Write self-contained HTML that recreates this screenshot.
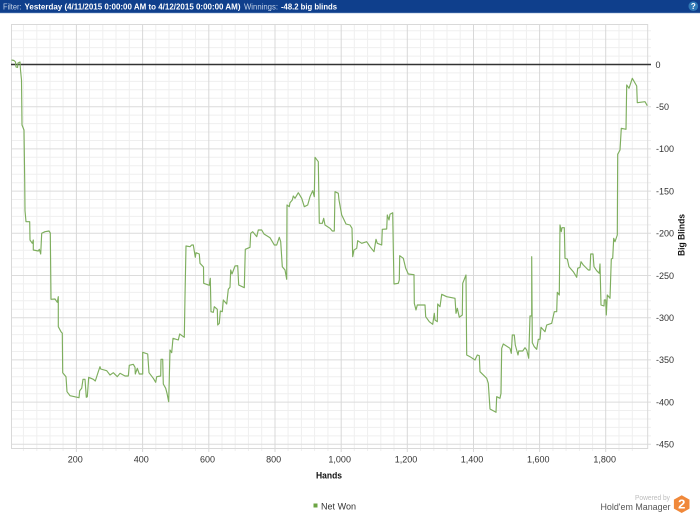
<!DOCTYPE html>
<html><head><meta charset="utf-8">
<style>
html,body{margin:0;padding:0;background:#fff;width:700px;height:516px;overflow:hidden}
svg{display:block}
text{font-family:"Liberation Sans",sans-serif}
</style></head>
<body>
<svg width="700" height="516" viewBox="0 0 700 516" xmlns="http://www.w3.org/2000/svg">
<rect x="0" y="0" width="700" height="13" fill="#0f3f8c"/>
<rect x="0" y="12.6" width="700" height="0.6" fill="#5d82b8"/>
<g font-size="8.6" fill="#fff">
<text x="3" y="9.5" fill="#c4d3e8" textLength="18.5" lengthAdjust="spacingAndGlyphs">Filter:</text>
<text x="24.5" y="9.5" font-weight="bold" textLength="216" lengthAdjust="spacingAndGlyphs">Yesterday (4/11/2015 0:00:00 AM to 4/12/2015 0:00:00 AM)</text>
<text x="244" y="9.5" fill="#c4d3e8" textLength="34" lengthAdjust="spacingAndGlyphs">Winnings:</text>
<text x="281" y="9.5" font-weight="bold" textLength="56" lengthAdjust="spacingAndGlyphs">-48.2 big blinds</text>
</g>
<circle cx="693.3" cy="6.2" r="4.8" fill="#2f78b5"/>
<text x="693.3" y="9.2" font-size="8" font-weight="bold" fill="#fff" text-anchor="middle">?</text>

<!-- minor horizontal -->
<path fill="none" stroke="#efefef" stroke-width="1" d="M11 30.7H651M11 39.2H651M11 47.6H651M11 56.1H651M11 72.9H651M11 81.4H651M11 89.8H651M11 98.3H651M11 115.1H651M11 123.6H651M11 132H651M11 140.5H651M11 157.3H651M11 165.8H651M11 174.2H651M11 182.7H651M11 199.5H651M11 208H651M11 216.4H651M11 224.9H651M11 241.7H651M11 250.2H651M11 258.6H651M11 267.1H651M11 283.9H651M11 292.4H651M11 300.8H651M11 309.3H651M11 326.1H651M11 334.6H651M11 343H651M11 351.5H651M11 368.3H651M11 376.8H651M11 385.2H651M11 393.7H651M11 410.5H651M11 419H651M11 427.4H651M11 435.9H651"/>
<!-- minor vertical -->
<path fill="none" stroke="#efefef" stroke-width="1" d="M23.4 24V451M36.8 24V451M50 24V451M63.1 24V451M89.5 24V451M102.8 24V451M116 24V451M129.3 24V451M155.8 24V451M169 24V451M182.2 24V451M195.5 24V451M222 24V451M235.2 24V451M248.4 24V451M261.7 24V451M288.1 24V451M301.4 24V451M314.6 24V451M327.9 24V451M354.3 24V451M367.6 24V451M380.8 24V451M394 24V451M420.5 24V451M433.8 24V451M447 24V451M460.2 24V451M486.7 24V451M500 24V451M513.2 24V451M526.4 24V451M552.9 24V451M566.1 24V451M579.4 24V451M592.6 24V451M619 24V451M632.3 24V451"/>
<!-- major horizontal -->
<path fill="none" stroke="#dcdcdc" stroke-width="1" d="M11 106.7H651M11 148.9H651M11 191.1H651M11 233.3H651M11 275.5H651M11 317.7H651M11 359.9H651M11 402.1H651M11 444.3H651"/>
<!-- major vertical -->
<path fill="none" stroke="#d8d8d8" stroke-width="1" d="M76.4 24V452M142.6 24V452M208.8 24V452M275 24V452M341.2 24V452M407.3 24V452M473.5 24V452M539.6 24V452M605.7 24V452"/>
<!-- frame -->
<path fill="none" stroke="#d9d9d9" stroke-width="1" d="M11.5 24.5H647.7V448.5H11.5Z"/>
<!-- zero line -->
<path fill="none" stroke="#333" stroke-width="1.5" d="M11 64.5H651"/>

<!-- data -->
<path fill="none" stroke="#7eae5e" stroke-width="1.15" stroke-linejoin="round" d="M11.5 60L14 60.5L15.5 62L16 67L17.5 67.5L18 63L20 62L20.5 70L21.5 80L22 125L24 130L24.7 180L25 210.7L26 221.7L29.7 221.7L30 240L32.3 243.3L33.3 240L33.3 250L38.3 251L39.3 249.3L40.7 254L41.7 233.3L45 231.7L49 231L50.3 233L51 299.3L55 299L57.3 302.3L58.3 296.7L58.3 326.7L61 331.7L62.3 333.3L62.7 372.7L66 376.7L67 391.7L70 395.7L79 397.7L79.7 390.7L81.7 388.3L83 379.3L85 379.3L86.3 397.3L87.3 396.7L88.7 377.3L93.3 379.3L95.3 381L98.3 371.7L100 366.7L100.7 369L106.7 370.7L110 375L113.3 372.7L117.3 376.7L120 373.3L125 376L128.3 376L129.3 365.3L133.3 364.3L135 367.3L135.3 374L137.3 368.3L139.3 374L142.7 374L142.7 352.3L147.7 354L149 372.7L153.3 378.3L155.7 382.3L156.7 376.7L160.7 376L161 359.3L162.7 359.3L163.3 384L165.7 388.3L167 393.3L168.7 401.7L170 350L171.7 352.7L173 338.3L178.3 340L179.7 334L184.3 337.3L185 296.7L186 246L190 246.7L191.7 245L193.3 245L195.3 257.3L196 252.7L199.3 254L200 263.3L203.5 267L203.7 283.3L209.3 285.3L210.3 278.3L211 311.7L213.3 312.3L214.3 306.7L217.3 309.3L217.7 325L219.3 323.3L220.3 311L222.3 311.7L223.3 300L226.7 304L228.3 289.3L230 287.3L230.7 270L232 274L235 266L237.7 265.7L238.7 285L244.3 287.7L245.3 249.3L250 247.3L250.7 233.3L252.7 231.7L256.7 236.7L258.3 230L261.7 230L264 234L270 237.7L274.3 245L276.7 245L279.3 237.3L280.7 241.7L282.3 266.7L285 270L286.7 279.3L287 205L289.3 206.7L290 202.7L292.3 200L293.3 196L295 198.3L298.3 192.7L301.7 198.3L304.3 206.7L307.7 205L310 196.7L312.7 190.7L314.3 196.7L315 157.3L318.3 161.7L319.3 223.3L322.3 223.3L323.7 218.3L325 225L330 228.3L332.3 231L334.3 231L335 191.7L338.3 193.3L339 200L341.7 215L343.3 218.3L346 224L350 225L352 228.3L352.7 256.7L354 250L356.7 248.3L357.7 240.7L361.7 243.3L366.7 241.7L370 246.7L374 251.7L376 239.3L377.3 243.3L381.7 245L382.3 229.3L386.7 229L387.3 215L389 220L390 214.3L392.7 212.7L393.3 248L394 284L398.3 283.3L399.3 280L399.7 255.7L403.3 258.3L405.7 268.3L408.3 274L414 274.7L414.3 303.3L416 310L417.3 305L425 305L425.7 316.7L429.3 321.7L432.7 324.3L434.3 313.3L435 320L437.3 321.7L437.7 304L440 306.7L441.7 294.3L446.7 296.7L455 298.3L456 313.3L457.3 308.3L459.3 317.3L462.3 315L462.7 283.3L466 275L466.7 355L470 356.7L475 360L477.3 355L479.3 355.7L480 371.7L486.7 378.3L488.3 383.3L490 409L496 412.3L496.7 396.7L500 398.3L501 393.3L501.7 348.3L503.3 344L510 348.3L511.3 353.3L512.3 335L514.3 335L515.3 345L518 355L518.7 351L522.7 351L525 347.7L526.7 350L528.7 358.3L530 316L531.7 316L531.7 256.7L532.3 342.7L534.3 346.7L536.7 349.3L538.3 339.3L540 339.3L541 327.3L545 331.7L546.7 325L551.7 323.3L554.3 311.7L556.7 311.7L557.3 292.3L559.3 295L560 225L561.3 231.7L562 227.7L564.3 227.7L565 258.3L567.3 259L569 266.7L573.3 271.7L576.7 277.3L577.7 268.3L580 267.3L581 261.7L583.3 265L588.3 270L590 270L590.7 254L593 254L594 266.7L596.7 270.7L599.3 273.3L600 264L601 305L604 306L604.3 300L605.7 300L606.3 315L607.3 295L610 298.3L611.3 259L612.7 258.3L613.7 238.3L615 241.7L617.3 235L617.7 154.3L620 150L621.3 128.3L626 129.3L626.7 85L629 88.3L632.3 78.3L636.7 86L637.3 102.7L645 101.7L647.3 105.7"/>

<!-- y labels -->
<g font-size="9" fill="#333">
<text x="655.5" y="68">0</text>
<text x="656" y="110">-50</text>
<text x="656" y="152.2">-100</text>
<text x="656" y="194.4">-150</text>
<text x="656" y="236.6">-200</text>
<text x="656" y="278.8">-250</text>
<text x="656" y="321">-300</text>
<text x="656" y="363.2">-350</text>
<text x="656" y="405.4">-400</text>
<text x="656" y="447.6">-450</text>
</g>
<!-- x labels -->
<g font-size="9" fill="#333" text-anchor="middle">
<text x="75.3" y="462.5">200</text>
<text x="141.3" y="462.5">400</text>
<text x="207.5" y="462.5">600</text>
<text x="273.7" y="462.5">800</text>
<text x="339.7" y="462.5">1,000</text>
<text x="406" y="462.5">1,200</text>
<text x="472" y="462.5">1,400</text>
<text x="538.3" y="462.5">1,600</text>
<text x="604.7" y="462.5">1,800</text>
</g>
<text x="329" y="478.5" font-size="9" font-weight="bold" fill="#111" text-anchor="middle" textLength="26" lengthAdjust="spacingAndGlyphs">Hands</text>
<text transform="translate(684.5 235) rotate(-90)" font-size="9" font-weight="bold" fill="#111" text-anchor="middle" textLength="42" lengthAdjust="spacingAndGlyphs">Big Blinds</text>

<rect x="313.5" y="503.5" width="4" height="4" fill="#6ca544"/>
<text x="321" y="509.5" font-size="9.5" fill="#333" textLength="35" lengthAdjust="spacingAndGlyphs">Net Won</text>

<text x="670" y="500" font-size="7.5" fill="#bdbdbd" text-anchor="end" textLength="35" lengthAdjust="spacingAndGlyphs">Powered by</text>
<text x="600.5" y="510" font-size="9" fill="#555" textLength="70" lengthAdjust="spacingAndGlyphs">Hold'em Manager</text>
<path d="M681.7 495.2L689.5 499.6V508.6L681.7 513L673.9 508.6V499.6Z" fill="#f0883a"/>
<text x="681.7" y="508.6" font-size="13" font-weight="bold" fill="#fff" text-anchor="middle">2</text>
</svg>
</body></html>
